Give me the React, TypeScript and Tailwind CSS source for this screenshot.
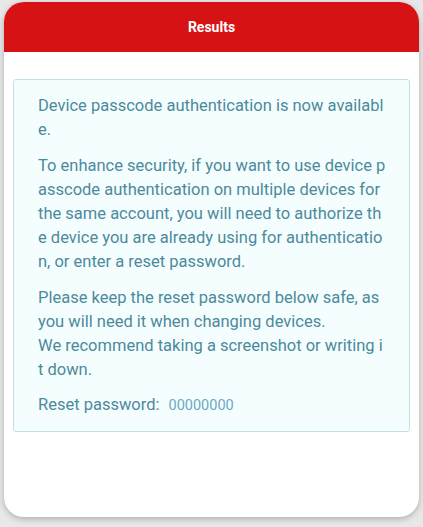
export default function App() {
  return (
    <div className="min-h-[527px] bg-[#e8e8e8] px-[4px] pt-[2px] pb-[10px]" style={{ fontFamily: "Roboto, 'Noto Sans', sans-serif" }}>
      <div className="h-[515px] bg-white rounded-[20px] shadow-[0_2px_6px_rgba(0,0,0,0.25)] overflow-hidden flex flex-col">
        {/* header */}
        <div className="h-[50px] bg-[#d61214] flex items-center justify-center">
          <h1 className="text-white text-[14px] font-bold">Results</h1>
        </div>

        {/* body */}
        <div className="px-[9px] pt-[27px]">
          <div className="border border-[#bfe0e8] bg-[#f5fefe] rounded-[3px] pl-[24px] pr-[23px] pt-[14px] pb-[13px] text-[#4b8a9c] text-[16.5px] leading-[24px] break-all">
            <p>Device passcode authentication is now available.</p>
            <p className="mt-[12px]">
              To enhance security, if you want to use device passcode authentication on multiple devices for the same account, you will need to authorize the device you are already using for authentication, or enter a reset password.
            </p>
            <p className="mt-[12px]">
              Please keep the reset password below safe, as you will need it when changing devices.
              <br />
              We recommend taking a screenshot or writing it down.
            </p>
            <p className="mt-[11px] flex items-baseline gap-[9px]">
              <span>Reset password:</span>
              <span className="text-[14.5px] text-[#6aa9c2]">00000000</span>
            </p>
          </div>
        </div>
      </div>
    </div>
  );
}
